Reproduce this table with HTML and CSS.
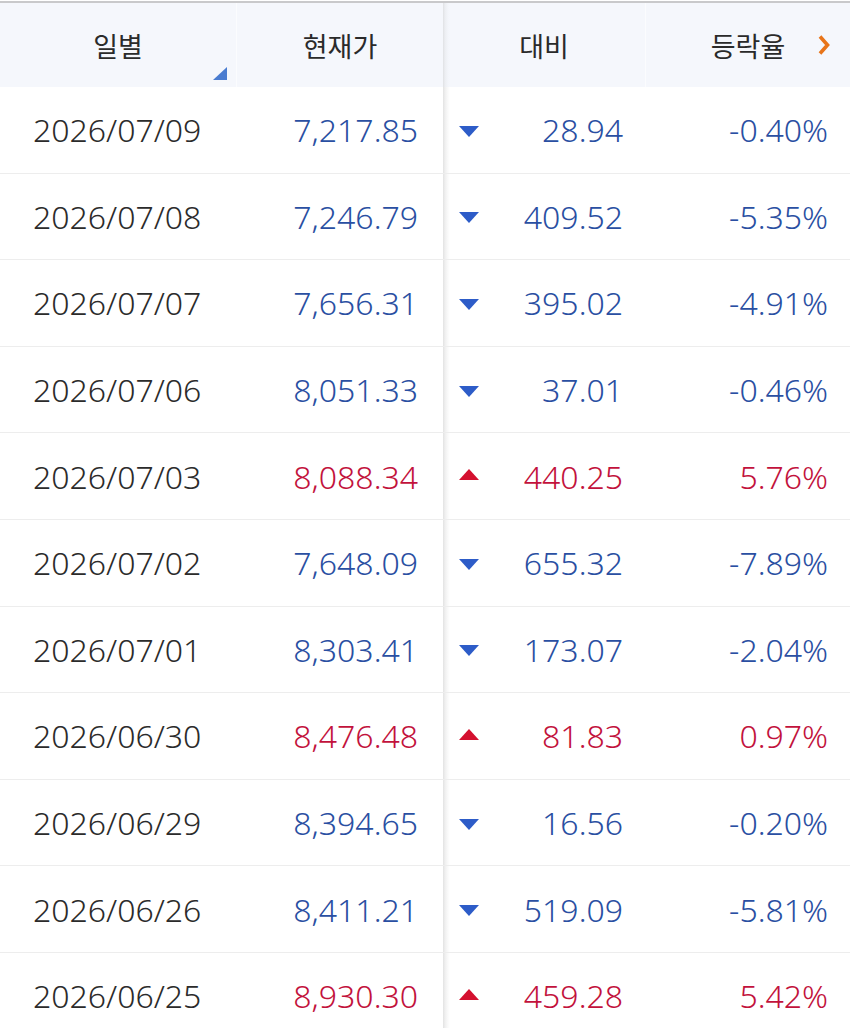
FILE: index.html
```html
<!DOCTYPE html>
<html lang="ko">
<head>
<meta charset="utf-8">
<link rel="stylesheet" href="styles.css">
</head>
<body>
<div class="table">
  <div class="row head">
    <div class="cell c1">일별<span class="sort"></span></div>
    <div class="cell c2">현재가</div>
    <div class="cell c3">대비</div>
    <div class="cell c4">등락율<svg class="chev" viewBox="0 0 14 22" width="14" height="22"><path d="M3 2.5 L10.5 11 L3 19.5" fill="none" stroke="#e8751a" stroke-width="3.6" stroke-linejoin="miter"/></svg></div>
  </div>
  <div class="row down"><div class="cell c1">2026/07/09</div><div class="cell c2">7,217.85</div><div class="cell c3"><span class="tri"></span>28.94</div><div class="cell c4">-0.40%</div></div>
  <div class="row down"><div class="cell c1">2026/07/08</div><div class="cell c2">7,246.79</div><div class="cell c3"><span class="tri"></span>409.52</div><div class="cell c4">-5.35%</div></div>
  <div class="row down"><div class="cell c1">2026/07/07</div><div class="cell c2">7,656.31</div><div class="cell c3"><span class="tri"></span>395.02</div><div class="cell c4">-4.91%</div></div>
  <div class="row down"><div class="cell c1">2026/07/06</div><div class="cell c2">8,051.33</div><div class="cell c3"><span class="tri"></span>37.01</div><div class="cell c4">-0.46%</div></div>
  <div class="row up"><div class="cell c1">2026/07/03</div><div class="cell c2">8,088.34</div><div class="cell c3"><span class="tri"></span>440.25</div><div class="cell c4">5.76%</div></div>
  <div class="row down"><div class="cell c1">2026/07/02</div><div class="cell c2">7,648.09</div><div class="cell c3"><span class="tri"></span>655.32</div><div class="cell c4">-7.89%</div></div>
  <div class="row down"><div class="cell c1">2026/07/01</div><div class="cell c2">8,303.41</div><div class="cell c3"><span class="tri"></span>173.07</div><div class="cell c4">-2.04%</div></div>
  <div class="row up"><div class="cell c1">2026/06/30</div><div class="cell c2">8,476.48</div><div class="cell c3"><span class="tri"></span>81.83</div><div class="cell c4">0.97%</div></div>
  <div class="row down"><div class="cell c1">2026/06/29</div><div class="cell c2">8,394.65</div><div class="cell c3"><span class="tri"></span>16.56</div><div class="cell c4">-0.20%</div></div>
  <div class="row down"><div class="cell c1">2026/06/26</div><div class="cell c2">8,411.21</div><div class="cell c3"><span class="tri"></span>519.09</div><div class="cell c4">-5.81%</div></div>
  <div class="row up"><div class="cell c1">2026/06/25</div><div class="cell c2">8,930.30</div><div class="cell c3"><span class="tri"></span>459.28</div><div class="cell c4">5.42%</div></div>
</div>
</body>
</html>
```
FILE: styles.css
```css
html, body {
  margin: 0;
  padding: 0;
  background: #ffffff;
}
body {
  font-family: "Noto Sans", "Noto Sans CJK KR", sans-serif;
  color: #222222;
  width: 850px;
  height: 1028px;
  overflow: hidden;
}
.table {
  border-top: 2px solid #c9c9cb;
  margin-top: 1px;
}
.row {
  display: grid;
  grid-template-columns: 236px 207px 202px 205px;
  height: 86.6px;
  border-bottom: 1px solid #ededed;
  box-sizing: border-box;
  font-size: 32px;
  font-weight: 350;
}
.row.head {
  height: 84px;
  background: #f5f7fc;
  border-bottom: none;
  font-size: 27px;
  font-weight: 400;
  color: #2a2a2a;
}
.cell {
  display: flex;
  align-items: center;
  position: relative;
  box-sizing: border-box;
}
.row .c1 { padding-left: 33px; color: #2b2b2b; }
.row .c2 { justify-content: flex-end; padding-right: 25px; }
.row .c3 {
  justify-content: flex-end;
  padding-right: 22px;
  background: linear-gradient(to right, #e2e2e2 0px, #efefef 2px, #fafafa 5px, rgba(255,255,255,0) 7px);
}
.row .c4 { justify-content: flex-end; padding-right: 22px; }

.row.head .cell {
  justify-content: center;
  padding: 0;
}
.row.head .c2 { border-left: 1px solid #fbfcfe; }
.row.head .c4 { border-left: 1px solid #fbfcfe; }
.row.head .c3 {
  background: linear-gradient(to right, #e0e1e4 0px, #eceef2 2px, #f3f5fa 5px, #f5f7fc 7px);
}
.chev {
  position: absolute;
  right: 19px;
  top: 31px;
}
.sort {
  position: absolute;
  right: 9px;
  bottom: 7px;
  width: 0;
  height: 0;
  border-style: solid;
  border-width: 0 0 13px 14px;
  border-color: transparent transparent #4a7cd0 transparent;
}

.down { color: #2a4fa2; }
.up { color: #c2123c; }
.row.down .c1, .row.up .c1 { color: #2b2b2b; }

.tri {
  position: absolute;
  left: 16px;
  top: 50%;
  width: 0;
  height: 0;
  border-style: solid;
}
.down .tri {
  margin-top: -4px;
  border-width: 11px 10px 0 10px;
  border-color: #2d5cc8 transparent transparent transparent;
}
.up .tri {
  margin-top: -7px;
  border-width: 0 10px 11px 10px;
  border-color: transparent transparent #d4102f transparent;
}
```
